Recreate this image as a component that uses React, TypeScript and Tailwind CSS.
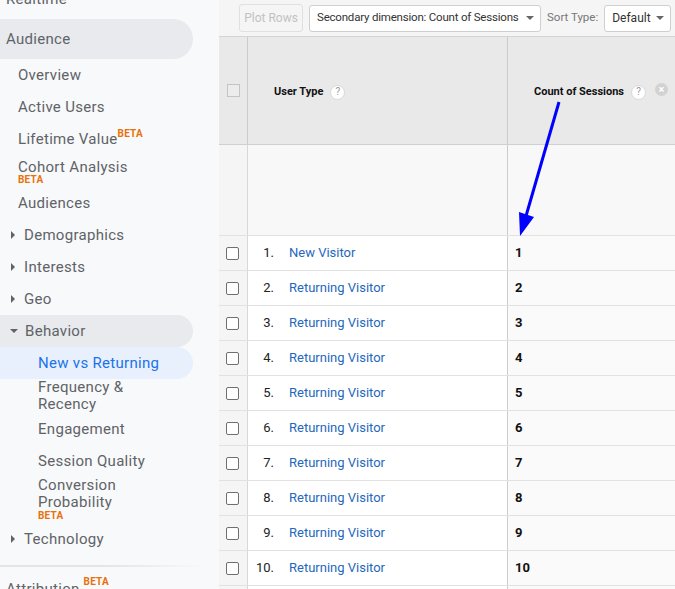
import React from 'react'

const visitors = [
  'New Visitor',
  'Returning Visitor',
  'Returning Visitor',
  'Returning Visitor',
  'Returning Visitor',
  'Returning Visitor',
  'Returning Visitor',
  'Returning Visitor',
  'Returning Visitor',
  'Returning Visitor',
]

function Beta({ className = '' }: { className?: string }) {
  return <span className={`text-[10px] font-bold leading-none tracking-[0.2px] text-[#e8710a] ${className}`}>BETA</span>
}

function CaretRight() {
  return <span className="mr-[9px] ml-[11px] inline-block h-0 w-0 border-y-[4px] border-l-[4px] border-y-transparent border-l-[#5f6368]" />
}

function CaretDown() {
  return <span className="mr-[7px] ml-[10px] inline-block h-0 w-0 border-x-[4px] border-t-[4px] border-x-transparent border-t-[#5f6368]" />
}

function SubItem({ label, children }: { label: string; children?: React.ReactNode }) {
  return (
    <div className="flex h-[32px] items-center pl-[18px]">
      {label}
      {children}
    </div>
  )
}

function GroupItem({ label, open = false }: { label: string; open?: boolean }) {
  return (
    <div className={`flex h-[32px] items-center rounded-r-full ${open ? 'mr-[26px] bg-[#e8eaed]' : ''}`}>
      {open ? <CaretDown /> : <CaretRight />}
      {label}
    </div>
  )
}

function Sidebar() {
  return (
    <aside className="w-[219px] shrink-0 bg-[#f8f9fa] font-['Roboto',sans-serif] text-[15px] tracking-[0.3px] text-[#5f6368]">
      <div className="-mt-[21px] flex h-[40px] items-center pl-[6px]">Realtime</div>
      <div className="mr-[26px] flex h-[40px] items-center rounded-r-full bg-[#e8eaed] pl-[6px]">Audience</div>
      <SubItem label="Overview" />
      <SubItem label="Active Users" />
      <SubItem label="Lifetime Value">
        <Beta className="-mt-[10px]" />
      </SubItem>
      <div className="flex h-[32px] flex-col justify-center pl-[18px]">
        <span className="leading-[18px]">Cohort Analysis</span>
        <Beta className="-mt-[1px]" />
      </div>
      <SubItem label="Audiences" />
      <GroupItem label="Demographics" />
      <GroupItem label="Interests" />
      <GroupItem label="Geo" />
      <GroupItem label="Behavior" open />
      <div className="mr-[26px] flex h-[32px] items-center rounded-r-full bg-[#e8f0fe] pl-[38px] text-[#1a73e8]">
        New vs Returning
      </div>
      <div className="flex h-[34px] flex-col pl-[38px] leading-[17px]">
        <span>Frequency &amp;</span>
        <span>Recency</span>
      </div>
      <div className="flex h-[32px] items-center pl-[38px]">Engagement</div>
      <div className="flex h-[32px] items-center pl-[38px]">Session Quality</div>
      <div className="flex h-[46px] flex-col pl-[38px] leading-[17px]">
        <span>Conversion</span>
        <span>Probability</span>
        <Beta />
      </div>
      <GroupItem label="Technology" />
      <div className="mt-[10px] mr-[14px] h-[2px] bg-gradient-to-r from-[#e3e4e6] via-[#e3e4e6] to-transparent" />
      <div className="flex h-[40px] items-center pt-[4px] pl-[6px]">
        Attribution
        <Beta className="-mt-[14px] ml-[4px]" />
      </div>
    </aside>
  )
}

function HelpIcon() {
  return (
    <span className="flex h-[15px] w-[15px] items-center justify-center rounded-full border border-[#d8d8d8] bg-white text-[10px] font-normal leading-none text-[#999]">
      ?
    </span>
  )
}

function CloseIcon() {
  return (
    <span className="flex h-[13px] w-[13px] items-center justify-center rounded-full bg-[#d2d2d2] text-[11px] font-bold leading-none text-white">
      ×
    </span>
  )
}

function Caret() {
  return <span className="inline-block h-0 w-0 border-x-[4px] border-t-[4px] border-x-transparent border-t-[#666]" />
}

export default function App() {
  return (
    <div className="flex h-[589px] w-[675px] overflow-hidden bg-[#f8f9fa]">
      <Sidebar />

      <main className="relative flex min-w-0 flex-1 flex-col font-['Roboto',sans-serif]">
        {/* Toolbar */}
        <div className="flex h-[37px] shrink-0 items-center border-b border-[#d4d4d4] bg-[#f5f5f5] pl-[20px] text-[12px] whitespace-nowrap">
          <button className="h-[28px] w-[64px] rounded-[3px] border border-[#e0e0e0] text-[12px] text-[#c2c2c2]">
            Plot Rows
          </button>
          <div className="ml-[6px] flex h-[27px] w-[232px] items-center justify-between rounded-[3px] border border-[#cfcfcf] bg-white pr-[6px] pl-[7px] text-[11.5px] tracking-[-0.2px] text-[#333]">
            <span>Secondary dimension: Count of Sessions</span>
            <Caret />
          </div>
          <span className="ml-[6px] text-[11.5px] text-[#777]">Sort Type:</span>
          <div className="ml-[6px] flex h-[27px] w-[67px] items-center justify-between rounded-[3px] border border-[#cfcfcf] bg-white pr-[6px] pl-[7px] text-[#333]">
            <span>Default</span>
            <Caret />
          </div>
        </div>

        {/* Header */}
        <div className="flex h-[108px] shrink-0 border-b border-[#d0d0d0] bg-[#e9e9e9] text-[11px] font-bold text-[#111]">
          <div className="flex w-[29px] items-center justify-center border-r border-[#cccccc]">
            <span className="h-[13px] w-[13px] border border-[#c4c4c4] bg-[#ececec]" />
          </div>
          <div className="flex w-[260px] items-center gap-[7px] border-r border-[#cccccc] pt-[3px] pl-[26px]">
            User Type
            <HelpIcon />
          </div>
          <div className="flex flex-1 items-center pt-[3px] pl-[26px]">
            Count of Sessions
            <span className="ml-[7px]">
              <HelpIcon />
            </span>
            <span className="ml-[9px] -mt-[6px]">
              <CloseIcon />
            </span>
          </div>
        </div>

        {/* Blank summary row */}
        <div className="flex h-[91px] shrink-0 border-b border-[#e2e2e2]">
          <div className="w-[29px] border-r border-[#d8d8d8] bg-[#f5f5f5]" />
          <div className="w-[260px] border-r border-[#cccccc] bg-[#f8f8f8]" />
          <div className="flex-1 bg-[#f8f8f8]" />
        </div>

        {/* Rows */}
        {visitors.map((name, i) => (
          <div key={i} className="flex h-[35px] shrink-0 border-b border-[#e2e2e2] text-[13px]">
            <div className="flex w-[29px] items-center justify-center border-r border-[#d8d8d8] bg-[#f5f5f5] pr-[1px]">
              <span className="h-[13px] w-[13px] rounded-[2px] border border-[#6f6f6f] bg-white" />
            </div>
            <div className="flex w-[260px] items-center border-r border-[#cccccc] bg-white">
              <span className="w-[26px] text-right text-[#222]">{i + 1}.</span>
              <span className="ml-[15px] text-[#1f68bd]">{name}</span>
            </div>
            <div className="flex flex-1 items-center bg-[#fafafa] pl-[7px] font-bold text-[#111]">{i + 1}</div>
          </div>
        ))}
        <div className="flex h-[35px] shrink-0">
          <div className="w-[29px] border-r border-[#d8d8d8] bg-[#f5f5f5]" />
          <div className="w-[260px] border-r border-[#cccccc] bg-white" />
          <div className="flex-1 bg-[#fafafa]" />
        </div>

        {/* Annotation arrow */}
        <svg className="pointer-events-none absolute top-0 left-0" width="456" height="589" viewBox="219 0 456 589">
          <line x1="559" y1="102" x2="526" y2="216" stroke="#0000ff" strokeWidth="3" />
          <polygon points="520,236 519,212 534,217" fill="#0000ff" />
        </svg>
      </main>
    </div>
  )
}
